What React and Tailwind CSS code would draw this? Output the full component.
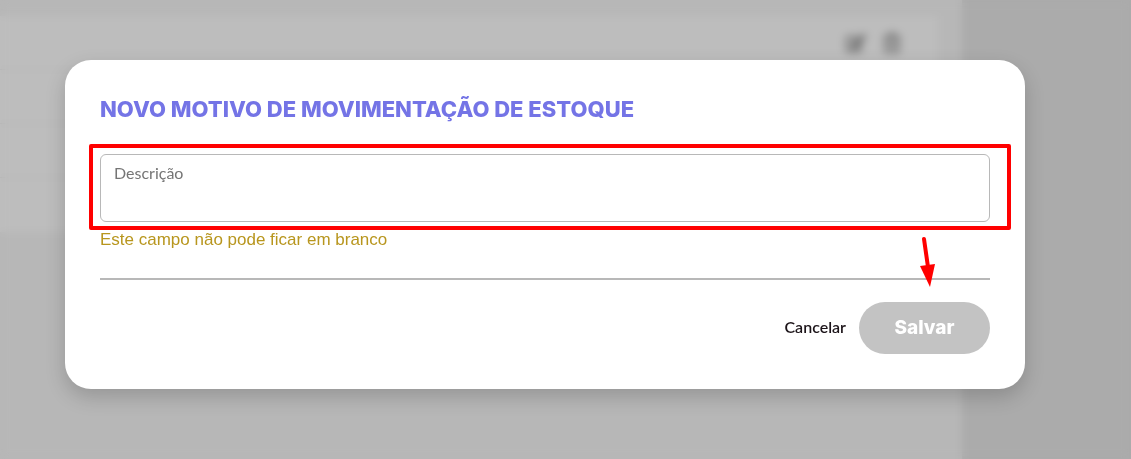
import React, { useState } from 'react';
import { FaEdit, FaRegTrashAlt } from 'react-icons/fa';

const rows = [1, 2, 3, 4];

function ReasonsPage() {
    return (
        <div className="min-h-screen bg-[#ababab] pr-[169px]" aria-hidden="true">
            <div className="min-h-screen bg-[#b7b7b7] pt-4 pr-6">
                <div className="bg-[#bdbdbd] divide-y divide-[#b3b3b3]">
                    {rows.map((row) => (
                        <div key={row} className="flex h-[54px] items-center justify-end gap-4 pr-9 text-[#606060]">
                            <FaEdit className="size-5" />
                            <FaRegTrashAlt className="size-5" />
                        </div>
                    ))}
                </div>
            </div>
        </div>
    );
}

function Arrow() {
    return (
        <svg className="absolute right-[55px] -top-[45px] h-[52px] w-4" viewBox="0 0 16 52" fill="none">
            <path d="M5 4L9 32" stroke="#ff0000" strokeWidth="4" strokeLinecap="round" />
            <path d="M1 31L16 29L11 52Z" fill="#ff0000" />
        </svg>
    );
}

export default function App() {
    const [description, setDescription] = useState('');

    return (
        <div className="relative min-h-screen overflow-hidden font-['Lato',sans-serif]">
            <ReasonsPage />
            <div className="absolute inset-0 pt-[60px] pr-[106px] pl-[65px] backdrop-blur-xs">
                <form
                    role="dialog"
                    aria-labelledby="modal-title"
                    onSubmit={(e) => e.preventDefault()}
                    className="rounded-[26px] bg-white p-[35px] shadow-[0_8px_20px_rgba(0,0,0,0.18)]"
                >
                    <h1 id="modal-title" className="font-['Inter',sans-serif] text-[22px] leading-7 font-extrabold text-[#7474e6]">
                        NOVO MOTIVO DE MOVIMENTAÇÃO DE ESTOQUE
                    </h1>
                    <div className="relative mt-[31px]">
                        <textarea
                            aria-label="Descrição"
                            placeholder="Descrição"
                            value={description}
                            onChange={(e) => setDescription(e.target.value)}
                            className="block h-[68px] w-full resize-none rounded-md border border-[#b8b8b8] px-[13px] py-[6px] text-base leading-6 outline-none placeholder:text-[#757575]"
                        />
                        <div className="pointer-events-none absolute -top-[10px] -right-[21px] -bottom-2 -left-[11px] rounded-xs border-4 border-[#ff0000]" />
                    </div>
                    <p className="mt-[6px] font-['Liberation_Sans',sans-serif] text-[17px] leading-6 text-[#b8961e]">
                        Este campo não pode ficar em branco
                    </p>
                    <div className="relative mt-[26px] flex items-center justify-end gap-[13px] border-t-2 border-[#b8b8b8] pt-[22px]">
                        <Arrow />
                        <button type="button" className="pb-[2px] text-base font-semibold text-[#1c1419]">
                            Cancelar
                        </button>
                        <button
                            type="submit"
                            className="h-[52px] w-[131px] rounded-full bg-[#c3c3c3] font-['Inter',sans-serif] text-[19px] font-extrabold text-white"
                        >
                            Salvar
                        </button>
                    </div>
                </form>
            </div>
        </div>
    );
}
